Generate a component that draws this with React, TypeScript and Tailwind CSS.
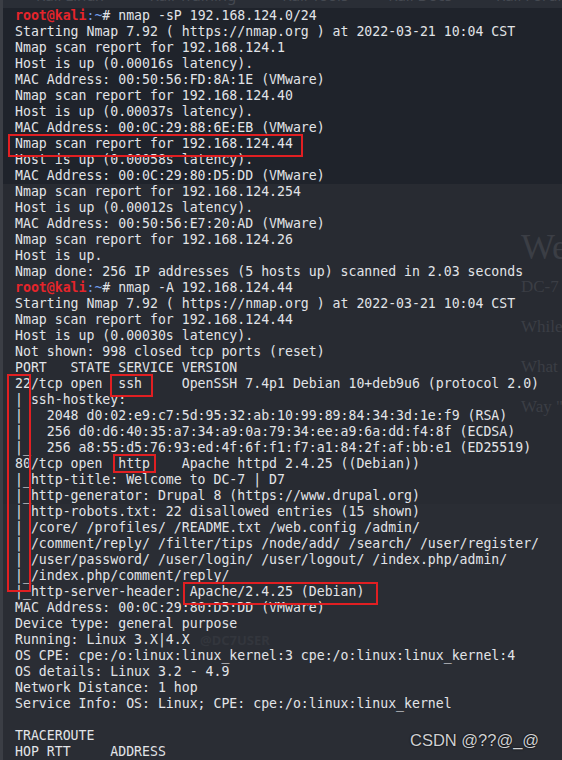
const mono = { fontFamily: '"DejaVu Sans Mono", "Liberation Mono", monospace' }

function Prompt({ cmd }: { cmd: string }) {
  return (
    <div className="h-4 whitespace-pre">
      <span className="font-bold text-[#e5252b]">root@kali</span>
      <span className="text-[#6f9ae6]">:~</span>
      <span>{'# ' + cmd}</span>
    </div>
  )
}

function Line({ text }: { text: string }) {
  return <div className="h-4 whitespace-pre">{text}</div>
}

const scanA = [
  'Starting Nmap 7.92 ( https://nmap.org ) at 2022-03-21 10:04 CST',
  'Nmap scan report for 192.168.124.1',
  'Host is up (0.00016s latency).',
  'MAC Address: 00:50:56:FD:8A:1E (VMware)',
  'Nmap scan report for 192.168.124.40',
  'Host is up (0.00037s latency).',
  'MAC Address: 00:0C:29:88:6E:EB (VMware)',
  'Nmap scan report for 192.168.124.44',
  'Host is up (0.00058s latency).',
  'MAC Address: 00:0C:29:80:D5:DD (VMware)',
]

const scanB = [
  'Nmap scan report for 192.168.124.254',
  'Host is up (0.00012s latency).',
  'MAC Address: 00:50:56:E7:20:AD (VMware)',
  'Nmap scan report for 192.168.124.26',
  'Host is up.',
  'Nmap done: 256 IP addresses (5 hosts up) scanned in 2.03 seconds',
]

const fullA = [
  'Starting Nmap 7.92 ( https://nmap.org ) at 2022-03-21 10:04 CST',
  'Nmap scan report for 192.168.124.44',
  'Host is up (0.00030s latency).',
  'Not shown: 998 closed tcp ports (reset)',
  'PORT   STATE SERVICE VERSION',
  '22/tcp open  ssh     OpenSSH 7.4p1 Debian 10+deb9u6 (protocol 2.0)',
  '| ssh-hostkey: ',
  '|   2048 d0:02:e9:c7:5d:95:32:ab:10:99:89:84:34:3d:1e:f9 (RSA)',
  '|   256 d0:d6:40:35:a7:34:a9:0a:79:34:ee:a9:6a:dd:f4:8f (ECDSA)',
  '|_  256 a8:55:d5:76:93:ed:4f:6f:f1:f7:a1:84:2f:af:bb:e1 (ED25519)',
  '80/tcp open  http    Apache httpd 2.4.25 ((Debian))',
  '|_http-title: Welcome to DC-7 | D7',
  '|_http-generator: Drupal 8 (https://www.drupal.org)',
]

const fullB = [
  '| http-robots.txt: 22 disallowed entries (15 shown)',
  '| /core/ /profiles/ /README.txt /web.config /admin/ ',
  '| /comment/reply/ /filter/tips /node/add/ /search/ /user/register/ ',
  '| /user/password/ /user/login/ /user/logout/ /index.php/admin/ ',
  '|_/index.php/comment/reply/',
  '|_http-server-header: Apache/2.4.25 (Debian)',
  'MAC Address: 00:0C:29:80:D5:DD (VMware)',
  'Device type: general purpose',
  'Running: Linux 3.X|4.X',
  'OS CPE: cpe:/o:linux:linux_kernel:3 cpe:/o:linux:linux_kernel:4',
  'OS details: Linux 3.2 - 4.9',
  'Network Distance: 1 hop',
  'Service Info: OS: Linux; CPE: cpe:/o:linux:linux_kernel',
  '',
  'TRACEROUTE',
  'HOP RTT     ADDRESS',
]

const bookmarks = [
  { label: 'Kali Linux', x: 'pl-[33px]' },
  { label: 'Kali Training', x: 'pl-[46px]' },
  { label: 'Kali Tools', x: 'pl-[46px]' },
  { label: 'Kali Docs', x: 'pl-[40px]' },
  { label: 'Kali Forums', x: 'pl-[44px]' },
  { label: 'NetHunter', x: 'pl-[46px]' },
]

// red annotation boxes drawn over the terminal output
const marks = [
  'left-[8px] top-[134px] w-[295px] h-[23px]',
  'left-[7px] top-[374px] w-[24px] h-[218px]',
  'left-[110px] top-[374px] w-[43px] h-[23px]',
  'left-[113px] top-[454px] w-[43px] h-[19px]',
  'left-[183px] top-[582px] w-[195px] h-[23px]',
]

export default function App() {
  return (
    <div className="relative w-[562px] h-[760px] overflow-hidden bg-[#2b2e35] flex">
      <div className="w-[3px] shrink-0 bg-[#3b3e45]" />
      <div className="flex-1 flex flex-col text-[13.2px] leading-4 text-[#e2e4e8]" style={mono}>
        <div className="h-[9px] overflow-hidden bg-[#2a2e36] flex text-[#454951] text-[15px]" style={{ fontFamily: '"Noto Sans", sans-serif' }}>
          {bookmarks.map((b) => (
            <div key={b.label} className={`${b.x} -mt-[13px] whitespace-nowrap`}>
              {b.label}
            </div>
          ))}
        </div>
        <div className="bg-[#1f232b] pl-3 h-[176px]">
          <Prompt cmd="nmap -sP 192.168.124.0/24" />
          {scanA.map((t, i) => (
            <Line key={i} text={t} />
          ))}
        </div>
        <div className="bg-[#282b32] pl-3 h-[320px]">
          {scanB.map((t, i) => (
            <Line key={i} text={t} />
          ))}
          <Prompt cmd="nmap -A 192.168.124.44" />
          {fullA.map((t, i) => (
            <Line key={i} text={t} />
          ))}
        </div>
        <div className="bg-[#2a2d34] pl-3 flex-1">
          {fullB.map((t, i) => (
            <Line key={i} text={t} />
          ))}
        </div>
      </div>

      {/* faint web page behind the translucent terminal */}
      <div className="absolute left-[521px] top-[227px] flex flex-col text-[#3b3e45]" style={{ fontFamily: '"Liberation Serif", serif' }}>
        <span className="text-[36px] leading-[40px]">Welcome</span>
        <span className="text-[17px] leading-[40px]">DC-7 is</span>
        <span className="text-[17px] leading-[40px]">While</span>
        <span className="text-[17px] leading-[40px]">What you</span>
        <span className="text-[17px] leading-[40px]">Way "</span>
      </div>
      <div className="absolute left-[200px] top-[633px] text-[13px] leading-[15px] font-bold text-[#33363d]" style={{ fontFamily: '"Noto Sans", sans-serif' }}>
        @DC7USER
      </div>

      {marks.map((m) => (
        <div key={m} className={`absolute border-2 border-[#e11f22] ${m}`} />
      ))}

      <div
        className="absolute left-[410px] top-[728px] text-[16.5px] text-[#cfd0d2] whitespace-nowrap"
        style={{ fontFamily: '"Liberation Sans", Arial, sans-serif', textShadow: '0 0 2px #000' }}
      >
        CSDN @??@_@
      </div>
    </div>
  )
}
